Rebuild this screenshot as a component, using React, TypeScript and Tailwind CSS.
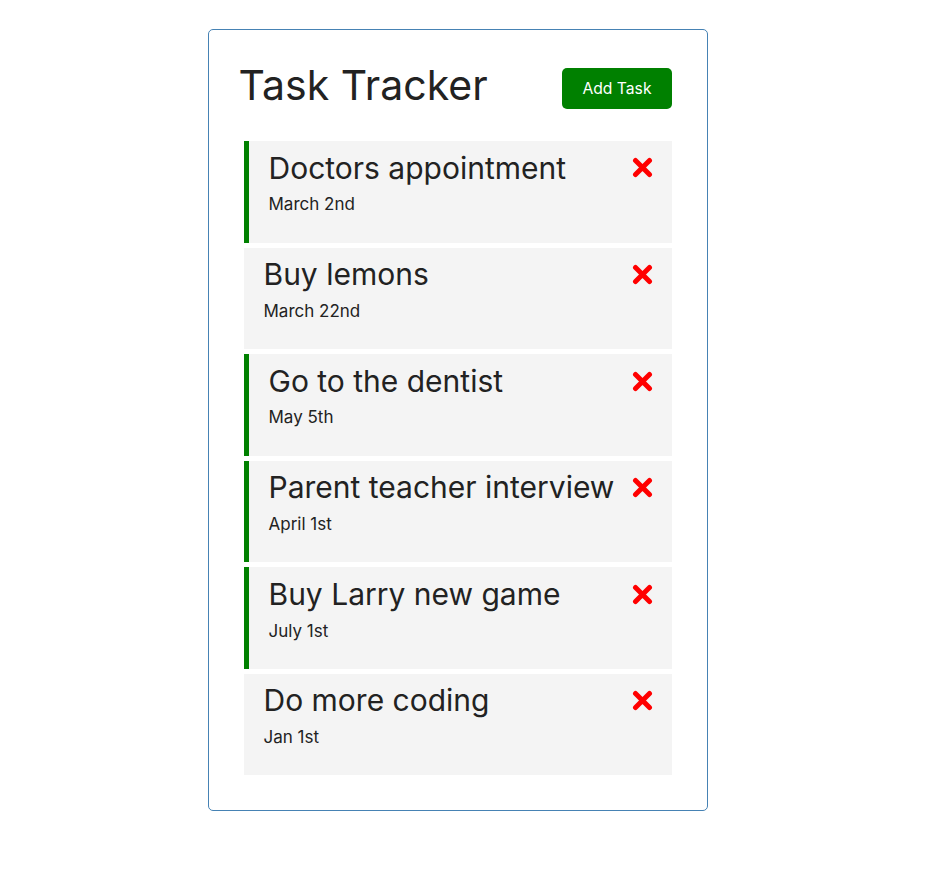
type Task = {
  id: number;
  text: string;
  day: string;
  reminder: boolean;
};

const tasks: Task[] = [
  { id: 1, text: "Doctors appointment", day: "March 2nd", reminder: true },
  { id: 2, text: "Buy lemons", day: "March 22nd", reminder: false },
  { id: 3, text: "Go to the dentist", day: "May 5th", reminder: true },
  { id: 4, text: "Parent teacher interview", day: "April 1st", reminder: true },
  { id: 5, text: "Buy Larry new game", day: "July 1st", reminder: true },
  { id: 6, text: "Do more coding", day: "Jan 1st", reminder: false },
];

function DeleteIcon() {
  return (
    <svg width="21" height="21" viewBox="0 0 21 21" className="-mr-px shrink-0">
      <path d="M3.5 3.5 L17.5 17.5 M17.5 3.5 L3.5 17.5" stroke="#ff0000" strokeWidth="5" strokeLinecap="round" />
    </svg>
  );
}

function TaskItem({ task }: { task: Task }) {
  return (
    <div
      className={
        task.reminder
          ? "mx-[5px] my-[5px] border-l-[5px] border-[#008000] bg-[#f4f4f4] pl-[20px] pr-[20px] pt-[9.5px] pb-[26.4px]"
          : "mx-[5px] my-[5px] bg-[#f4f4f4] pl-[20px] pr-[20px] pt-[9.5px] pb-[26.4px]"
      }
    >
      <h3 className="flex items-center justify-between gap-2 text-[30px] leading-[34.8px] font-normal">
        <span className="whitespace-nowrap">{task.text}</span>
        <DeleteIcon />
      </h3>
      <p className="mt-[6.9px] text-[17px] leading-[24px]">{task.day}</p>
    </div>
  );
}

export default function App() {
  return (
    <div className="min-h-screen bg-white pt-[29px] text-[#222] [font-family:Inter,'DejaVu_Sans',sans-serif]">
      <div className="w-[915px]">
        <div className="mx-auto w-[500px] rounded-[5px] border border-[#4682b4] p-[30px]">
          <header className="mb-[25px] flex h-[56px] items-center justify-between">
            <h1 className="mb-[6px] text-[41px] font-normal leading-none">Task Tracker</h1>
            <button
              type="button"
              className="m-[5px] rounded-[5px] bg-[#008000] px-[20px] py-[10px] text-[15.7px] leading-[21px] text-white"
            >
              Add Task
            </button>
          </header>

          <div>
            {tasks.map((task) => (
              <TaskItem key={task.id} task={task} />
            ))}
          </div>
        </div>
      </div>
    </div>
  );
}
